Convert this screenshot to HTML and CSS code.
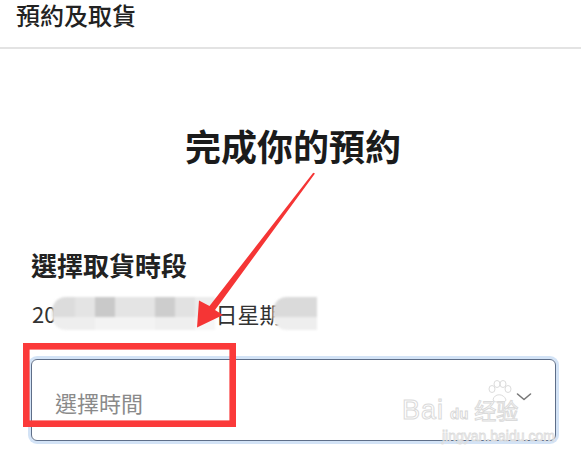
FILE: index.html
```html
<!DOCTYPE html>
<html lang="zh-Hant">
<head>
<meta charset="utf-8">
<title>預約及取貨</title>
<link rel="stylesheet" href="styles.css">
</head>
<body>
<header class="topbar">
  <h1 class="topbar-title">預約及取貨</h1>
</header>
<main class="content">
  <h2 class="page-title">完成你的預約</h2>
  <section class="pickup">
    <h3 class="section-title">選擇取貨時段</h3>
    <p class="date-line"><span class="date-text">20</span><span class="mosaic mosaic-a"></span><span class="date-text">日星期</span><span class="mosaic mosaic-b"></span></p>
    <div class="select">
      <span class="placeholder">選擇時間</span>
      <svg class="chevron" width="16" height="10" viewBox="0 0 16 10" aria-hidden="true"><path d="M1.5 2 L8 7.5 L14.5 2" fill="none" stroke="#777" stroke-width="1.6" stroke-linecap="round" stroke-linejoin="round"/></svg>
    </div>
  </section>
</main>
<div class="watermark" aria-hidden="true">
  <svg class="paw" width="26" height="24" viewBox="0 0 26 24"><g fill="none" stroke="#dcdcdc" stroke-width="1"><ellipse cx="6" cy="9" rx="3" ry="3.5"/><ellipse cx="11" cy="4" rx="3" ry="3.5"/><ellipse cx="17" cy="4" rx="3" ry="3.5"/><ellipse cx="22" cy="9" rx="3" ry="3.5"/><path d="M7 20 C8 13 18 13 20 20 C20 23 8 23 7 20Z"/></g></svg>
  <div class="wm-line"><span class="wm-big">Bai</span><span class="wm-du">du</span><span class="wm-cn">经验</span></div>
  <div class="wm-url">jingyan.baidu.com</div>
</div>
<svg class="annotation" width="581" height="457" viewBox="0 0 581 457" aria-hidden="true">
  <polygon points="315,173.5 215,310 223,315 197,327.5 199,300.5 209.5,306 313.2,172.8" fill="#f53535"/>
  <rect x="26.3" y="346.3" width="206.4" height="77.4" fill="none" stroke="#fb3a3a" stroke-width="6.6"/>
</svg>
</body>
</html>
```
FILE: styles.css
```css
html, body {
  margin: 0;
  padding: 0;
}
body {
  width: 581px;
  height: 457px;
  overflow: hidden;
  position: relative;
  background: #ffffff;
  font-family: "Noto Sans CJK TC", "Noto Sans", sans-serif;
  color: #222;
}
.topbar {
  height: 47px;
  border-bottom: 2px solid #e3e3e3;
  padding-left: 16px;
}
.topbar-title {
  margin: 0;
  font-size: 24px;
  line-height: 30px;
  font-weight: 500;
  color: #222;
}
.content {
  padding: 0 25px 0 30px;
}
.page-title {
  margin: 74px 0 0;
  text-align: center;
  font-size: 36px;
  line-height: 44px;
  font-weight: 700;
  color: #1b1b1b;
}
.section-title {
  margin: 81px 0 0 1px;
  font-size: 26px;
  line-height: 34px;
  font-weight: 700;
  color: #222;
}
.date-line {
  margin: 16px 0 0 2px;
  display: flex;
  align-items: center;
  height: 30px;
  font-size: 22px;
  line-height: 30px;
  color: #333;
}
.mosaic {
  display: block;
  height: 33px;
  flex: none;
  filter: blur(0.8px);
}
.mosaic-a {
  width: 163px;
  margin-left: -4px;
  border-radius: 14px 0 0 14px;
  background:
    linear-gradient(to right, #dcdcdc 0 23px, #e4e4e4 23px 43px, #c9c9c9 43px 63px, #e4e4e4 63px 103px, #cdcdcd 103px 123px, #e2e2e2 123px 143px, #ececec 143px) top / 100% 20px no-repeat,
    linear-gradient(to right, #eeeeee 0 43px, #f3f3f3 43px 103px, #efefef 103px 143px, #f6f6f6 143px) bottom / 100% 13px no-repeat;
}
.mosaic-b {
  width: 44px;
  margin-left: -8px;
  border-radius: 14px 0 0 14px;
  background:
    linear-gradient(#dadada, #dadada) top / 100% 20px no-repeat,
    linear-gradient(#eeeeee, #eeeeee) bottom / 100% 13px no-repeat;
}
.select {
  margin-top: 31px;
  margin-left: 1px;
  height: 80px;
  border: 1px solid #5e6e88;
  border-radius: 6px;
  box-shadow: 0 0 0 3px rgba(130, 175, 230, 0.35);
  display: flex;
  align-items: center;
  justify-content: space-between;
  padding: 0 23px 0 23px;
}
.placeholder {
  font-size: 22px;
  line-height: 28px;
  color: #8a8a8a;
  margin-top: 4px;
}
.chevron {
  margin-top: -6px;
}
.watermark {
  position: absolute;
  left: 402px;
  top: 380px;
  width: 175px;
  font-family: "Liberation Sans", "Noto Sans CJK SC", sans-serif;
}
.paw {
  position: absolute;
  left: 84px;
  top: 0;
}
.wm-line {
  margin-top: 16px;
  display: flex;
  align-items: baseline;
  line-height: 26px;
}
.wm-big {
  font-size: 27px;
  color: rgba(255, 255, 255, 0.4);
  -webkit-text-stroke: 1px #dadada;
  letter-spacing: 1px;
}
.wm-du {
  margin-left: 6px;
  font-size: 15px;
  font-weight: 700;
  color: rgba(255, 255, 255, 0.4);
  -webkit-text-stroke: 1px #d8d8d8;
}
.wm-cn {
  margin-left: 6px;
  font-size: 22px;
  font-family: "Noto Sans CJK SC", sans-serif;
  color: rgba(255, 255, 255, 0.4);
  -webkit-text-stroke: 1px #dadada;
}
.wm-url {
  margin-left: 40px;
  font-size: 14px;
  line-height: 18px;
  color: rgba(255, 255, 255, 0.4);
  -webkit-text-stroke: 0.8px #dcdcdc;
}
.annotation {
  position: absolute;
  left: 0;
  top: 0;
  pointer-events: none;
}
```
